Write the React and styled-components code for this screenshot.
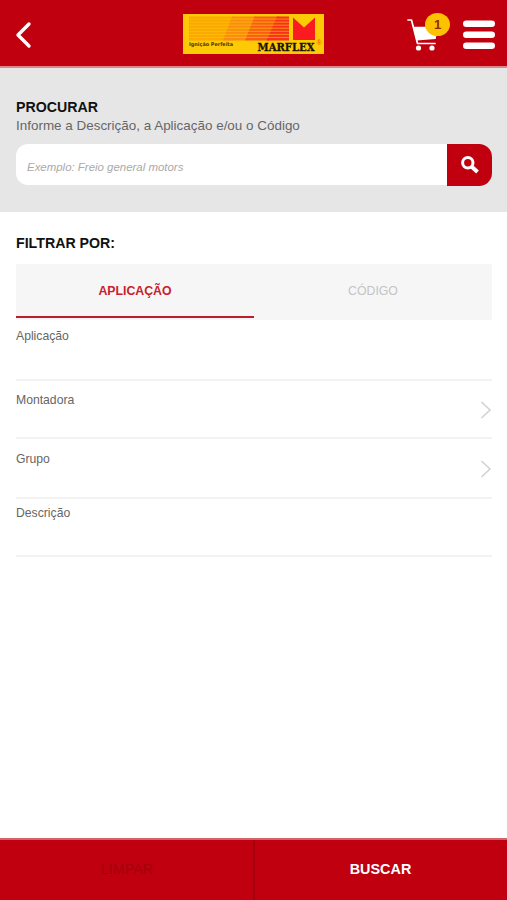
import React, { useState } from 'react';
import styled, { createGlobalStyle } from 'styled-components';

const GlobalStyle = createGlobalStyle`
  * {
    box-sizing: border-box;
  }

  body {
    margin: 0;
    background: #fff;
    font-family: 'Liberation Sans', Arial, sans-serif;
  }

  button,
  input {
    font-family: inherit;
    border: 0;
    padding: 0;
    margin: 0;
  }

  svg {
    display: block;
  }
`;

const Page = styled.div`
  height: 900px;
  display: flex;
  flex-direction: column;
  overflow: hidden;
`;

const Header = styled.header`
  height: 68px;
  display: grid;
  grid-template-columns: 183px 141px 1fr;
  align-items: center;
  padding: 2px 12px 0 0;
  background: #c0000f;
  border-bottom: 2px solid #df868b;
`;

const IconButton = styled.button`
  background: none;
  cursor: pointer;
`;

const BackButton = styled(IconButton)`
  justify-self: start;
  margin: 2px 0 0 15px;
`;

const Actions = styled.div`
  display: flex;
  justify-content: flex-end;
  align-items: center;
  gap: 12px;
`;

const Cart = styled(IconButton)`
  position: relative;
  width: 44px;
  height: 42px;
  margin-top: -2px;
`;

const MenuButton = styled(IconButton)`
  margin-top: 1px;
`;

const Badge = styled.span`
  position: absolute;
  top: 1px;
  left: 18px;
  width: 25px;
  height: 23px;
  border-radius: 50%;
  background: #fcc200;
  color: #8a2a08;
  font-size: 13px;
  font-weight: bold;
  line-height: 24px;
  text-align: center;
`;

const SearchSection = styled.section`
  height: 144px;
  padding: 30px 15px 0 16px;
  background: #e6e6e6;
`;

const Title = styled.h2`
  margin: 0;
  color: #111;
  font-size: 14.2px;
  font-weight: bold;
  line-height: 18px;
`;

const Hint = styled.p`
  margin: 1px 0 9px;
  color: #666;
  font-size: 13.45px;
  line-height: 18px;
`;

const SearchForm = styled.form`
  display: flex;
  height: 42px;
`;

const SearchInput = styled.input`
  flex: 1;
  min-width: 0;
  height: 41px;
  padding: 5px 11px 0;
  border-radius: 12px 0 0 12px;
  background: #fff;
  font-size: 11.45px;
  font-style: italic;
  outline: none;

  &::placeholder {
    color: #aaa;
    opacity: 1;
  }
`;

const SearchButton = styled.button`
  width: 45px;
  display: flex;
  align-items: center;
  justify-content: center;
  padding-bottom: 1px;
  border-radius: 0 13px 13px 0;
  background: #c0000f;
`;

const Filters = styled.section`
  flex: 1;
  padding: 22px 15px 0 16px;
`;

const Tabs = styled.div`
  display: flex;
  height: 56px;
  margin: 12px 0 0;
  padding-bottom: 2px;
  background: #f6f6f6;
`;

const Tab = styled.button`
  flex: 1;
  background: none;
  border-bottom: 2px solid ${props => (props.$active ? '#bd1c2b' : 'transparent')};
  color: ${props => (props.$active ? '#c9202e' : '#c4c4c4')};
  font-size: 12.3px;
  font-weight: ${props => (props.$active ? 'bold' : 'normal')};
  padding-top: 2px;
`;

const Field = styled.div`
  display: flex;
  justify-content: space-between;
  height: ${props => props.$height}px;
  padding-top: ${props => props.$top}px;
  border-bottom: 2px solid #f3f3f3;
`;

const FieldLabel = styled.span`
  color: #666;
  font-size: 12.2px;
  line-height: 14px;
`;

const Chevron = styled.svg`
  margin-top: 7px;
`;

const Footer = styled.footer`
  display: grid;
  grid-template-columns: 255px 1fr;
  height: 62px;
  background: #c0000f;
  border-top: 2px solid #d0656c;
`;

const FooterButton = styled.button`
  background: none;
  color: ${props => (props.$muted ? '#a3000c' : '#fff')};
  font-size: 14.4px;
  font-weight: ${props => (props.$muted ? 'normal' : 'bold')};
  border-right: ${props => (props.$muted ? '2px solid #a6000c' : '0')};
  padding: ${props => (props.$muted ? '0 0 2px 1px' : '0 1px 2px 0')};
`;

const stripes = [0, 1, 2, 3, 4, 5, 6];

const Logo = () => (
  <svg width="141" height="40" viewBox="0 0 141 40">
    <rect width="141" height="40" fill="#fccb05" />
    <rect x="6" y="2.5" width="45" height="24" fill="#fca800" />
    <path d="M49 2.5H73L63 26.5H40Z" fill="#fb8c10" />
    <path d="M71.5 2.5H96L86 26.5H62Z" fill="#fb5c15" />
    <path d="M94 2.5H106V26.5H83.5Z" fill="#f9301c" />
    {stripes.map(i => (
      <rect key={i} x="6" y={4.6 + i * 3.05} width="100" height="0.9" fill="#fccb05" opacity="0.7" />
    ))}
    <path d="M110 3.5L121 13.5L132 3.5V26H110Z" fill="#fa1b20" />
    <text
      x="6"
      y="32"
      fontFamily="DejaVu Sans"
      fontSize="5.2"
      fontWeight="bold"
      textLength="44"
      lengthAdjust="spacingAndGlyphs"
      fill="#49390a"
    >
      Ignição Perfeita
    </text>
    <text
      x="74.5"
      y="37"
      fontFamily="DejaVu Serif"
      fontSize="11.5"
      fontWeight="bold"
      textLength="57"
      lengthAdjust="spacingAndGlyphs"
      fill="#1c1400"
      stroke="#1c1400"
      strokeWidth="0.3"
    >
      MARFLEX
    </text>
    <text x="133.8" y="31" fontFamily="Liberation Sans" fontSize="6.5" fill="#f0501a">
      ®
    </text>
  </svg>
);

const Arrow = () => (
  <Chevron width="14" height="20" viewBox="0 0 14 20">
    <path d="M3.5 2L12 10L3.5 18" fill="none" stroke="#d2d2d2" strokeWidth="1.6" />
  </Chevron>
);

const fields = [
  { name: 'Aplicação', height: 61, top: 9 },
  { name: 'Montadora', height: 58, top: 12, arrow: true },
  { name: 'Grupo', height: 60, top: 13, arrow: true },
  { name: 'Descrição', height: 58, top: 7 },
];

const App = () => {
  const [tab, setTab] = useState('APLICAÇÃO');
  const [query, setQuery] = useState('');

  return (
    <Page>
      <GlobalStyle />
      <Header>
        <BackButton aria-label="Voltar">
          <svg width="17" height="28" viewBox="0 0 17 28">
            <path
              d="M14 3L3 14L14 25"
              fill="none"
              stroke="#fff"
              strokeWidth="3.4"
              strokeLinecap="round"
              strokeLinejoin="round"
            />
          </svg>
        </BackButton>
        <Logo />
        <Actions>
          <Cart aria-label="Carrinho">
            <svg width="44" height="42" viewBox="0 0 44 42">
              <path
                d="M1 8H4.5L10.5 31.5H28"
                fill="none"
                stroke="#fff"
                strokeWidth="1.7"
                strokeLinecap="round"
                strokeLinejoin="round"
              />
              <path d="M6.2 14.7H31L28.700 27L9.5 28.5Z" fill="#fff" />
              <circle cx="11.5" cy="36" r="2.6" fill="#fff" />
              <circle cx="25" cy="36" r="2.6" fill="#fff" />
            </svg>
            <Badge>1</Badge>
          </Cart>
          <MenuButton aria-label="Menu">
            <svg width="32" height="30" viewBox="0 0 32 30">
              <rect x="0" y="0.5" width="32" height="6.6" rx="3.3" fill="#fff" />
              <rect x="0" y="11.5" width="32" height="6.6" rx="3.3" fill="#fff" />
              <rect x="0" y="22.5" width="32" height="6.6" rx="3.3" fill="#fff" />
            </svg>
          </MenuButton>
        </Actions>
      </Header>

      <SearchSection>
        <Title>PROCURAR</Title>
        <Hint>Informe a Descrição, a Aplicação e/ou o Código</Hint>
        <SearchForm onSubmit={e => e.preventDefault()}>
          <SearchInput
            value={query}
            onChange={e => setQuery(e.target.value)}
            placeholder="Exemplo: Freio general motors"
          />
          <SearchButton aria-label="Procurar">
            <svg width="18" height="18" viewBox="0 0 18 18">
              <circle cx="6.8" cy="6.8" r="5.2" fill="none" stroke="#fff" strokeWidth="3" />
              <path d="M10.5 10.5L16.5 16" stroke="#fff" strokeWidth="4" />
            </svg>
          </SearchButton>
        </SearchForm>
      </SearchSection>

      <Filters>
        <Title>FILTRAR POR:</Title>
        <Tabs>
          {['APLICAÇÃO', 'CÓDIGO'].map(name => (
            <Tab key={name} $active={tab === name} onClick={() => setTab(name)}>
              {name}
            </Tab>
          ))}
        </Tabs>
        {fields.map(field => (
          <Field key={field.name} $height={field.height} $top={field.top}>
            <FieldLabel>{field.name}</FieldLabel>
            {field.arrow && <Arrow />}
          </Field>
        ))}
      </Filters>

      <Footer>
        <FooterButton $muted>LIMPAR</FooterButton>
        <FooterButton>BUSCAR</FooterButton>
      </Footer>
    </Page>
  );
};

export default App;
